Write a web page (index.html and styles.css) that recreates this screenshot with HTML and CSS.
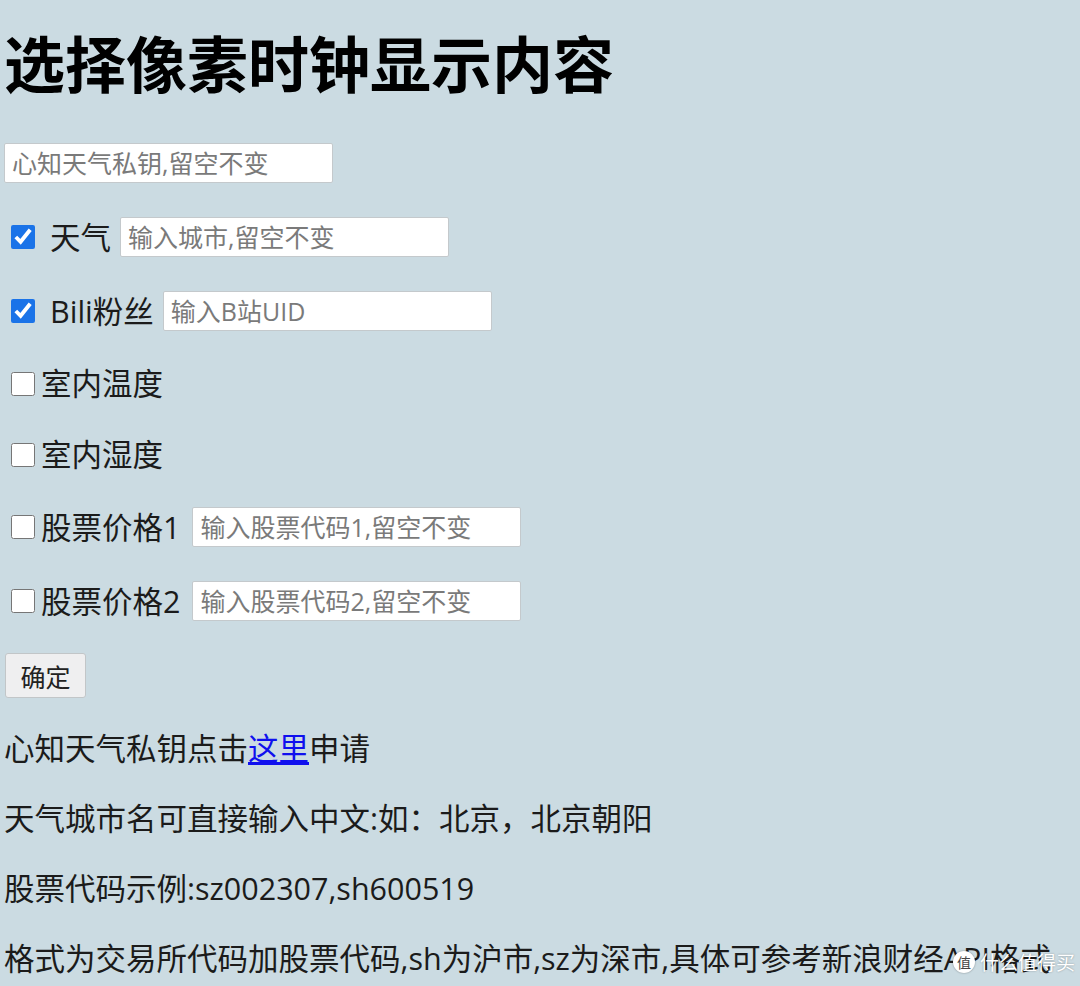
FILE: index.html
```html
<!DOCTYPE html>
<html lang="zh-CN">
<head>
    <meta charset="UTF-8">
    <meta name="viewport" content="width=device-width, initial-scale=1.0">
    <title>像素时钟设置</title>
    <link rel="stylesheet" href="styles.css">
</head>
<body>
    <h1>选择像素时钟显示内容</h1>

    <form id="config-form">
        <div class="opt">
            <input type="text" id="weather-key" placeholder="心知天气私钥,留空不变">
        </div>

        <div class="opt">
            <input type="checkbox" id="show-weather" checked>
            <label for="show-weather" class="spaced">天气</label>
            <input type="text" id="city" placeholder="输入城市,留空不变">
        </div>

        <div class="opt">
            <input type="checkbox" id="show-bili" checked>
            <label for="show-bili" class="spaced">Bili粉丝</label>
            <input type="text" id="bili-uid" placeholder="输入B站UID">
        </div>

        <div class="opt bare">
            <input type="checkbox" id="show-temp">
            <label for="show-temp">室内温度</label>
        </div>

        <div class="opt bare">
            <input type="checkbox" id="show-humi">
            <label for="show-humi">室内湿度</label>
        </div>

        <div class="opt">
            <input type="checkbox" id="show-stock1">
            <label for="show-stock1">股票价格1</label>
            <input type="text" id="stock1" placeholder="输入股票代码1,留空不变">
        </div>

        <div class="opt">
            <input type="checkbox" id="show-stock2">
            <label for="show-stock2">股票价格2</label>
            <input type="text" id="stock2" placeholder="输入股票代码2,留空不变">
        </div>

        <button type="submit">确定</button>
    </form>

    <p>心知天气私钥点击<a href="#">这里</a>申请</p>
    <p>天气城市名可直接输入中文:如：北京，北京朝阳</p>
    <p>股票代码示例:sz002307,sh600519</p>
    <p class="long">格式为交易所代码加股票代码,sh为沪市,sz为深市,具体可参考新浪财经API格式</p>

    <div id="badge">
        <span class="badge-icon">值</span>
        <span class="badge-text">什么值得买</span>
    </div>
</body>
</html>
```

FILE: styles.css
```css
body {
    margin: 0 4px;
    background-color: #cbdbe2;
    color: #1b1b1b;
    font-family: "Open Sans", "Noto Sans CJK SC", sans-serif;
    font-size: 30.5px;
    overflow: hidden;
}
h1 {
    font-family: "Noto Sans CJK SC", sans-serif;
    font-size: 61px;
    font-weight: 700;
    line-height: 70px;
    margin: 27px 0 44px 0;
    color: #000;
}
.opt {
    display: flex;
    align-items: center;
    height: 44px;
    margin-bottom: 30px;
}
.opt.bare {
    height: 41px;
}
.opt label {
    line-height: 41px;
    margin-right: 12px;
}
.opt label.spaced {
    margin-left: 9px;
    margin-right: 9px;
}
input[type="checkbox"] {
    width: 24px;
    height: 24px;
    margin: 0 6px 0 7px;
    accent-color: #1a73e8;
}
input[type="text"] {
    box-sizing: border-box;
    width: 329px;
    height: 40px;
    padding: 0 7px;
    border: 1px solid #c4c9cc;
    border-radius: 2px;
    background: #fff;
    font-family: "Open Sans", "Noto Sans CJK SC", sans-serif;
    font-size: 25px;
    color: #222;
}
input[type="text"]::placeholder {
    color: #7a7a7a;
}
button {
    display: block;
    box-sizing: border-box;
    width: 81px;
    height: 45px;
    margin: 28px 0 0 1px;
    padding: 0;
    border: 1px solid #c2c6c8;
    border-radius: 3px;
    background: #efeff0;
    font-family: "Open Sans", "Noto Sans CJK SC", sans-serif;
    font-size: 25px;
    color: #222;
}
p {
    line-height: 40px;
    margin: 30px 0;
    white-space: nowrap;
}
a {
    color: #1010ee;
}
#badge {
    position: absolute;
    left: 953px;
    top: 948px;
    display: flex;
    align-items: center;
    gap: 5px;
    color: #fff;
    text-shadow: 0 0 2px rgba(0, 0, 0, 0.35);
}
.badge-icon {
    width: 22px;
    height: 22px;
    border-radius: 50%;
    background: #fff;
    color: #444;
    font-family: "Noto Sans CJK SC", sans-serif;
    font-size: 14px;
    line-height: 22px;
    text-align: center;
    text-shadow: none;
    box-shadow: 0 0 2px rgba(0, 0, 0, 0.4);
}
.badge-text {
    font-family: "Noto Sans CJK SC", sans-serif;
    font-size: 19px;
}
```
